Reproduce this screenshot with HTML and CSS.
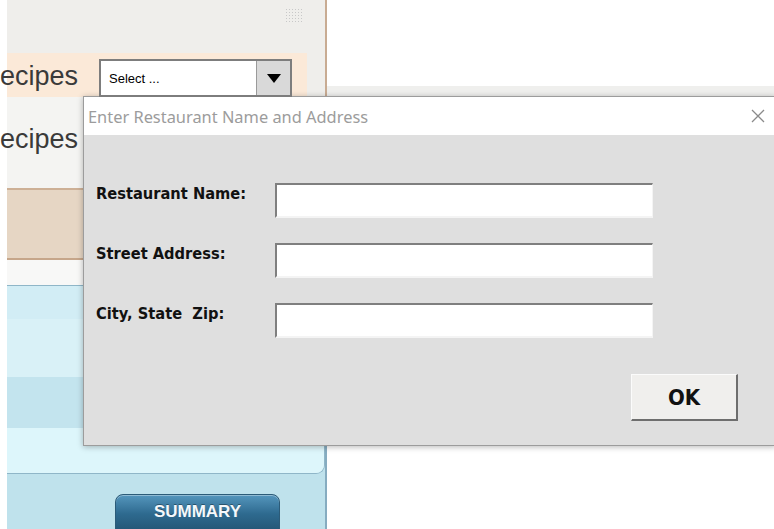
FILE: index.html
```html
<!DOCTYPE html>
<html lang="en">
<head>
<meta charset="utf-8">
<title>Recipes</title>
<link rel="stylesheet" href="styles.css">
</head>
<body>
<div class="page">
  <aside class="sidebar">
    <div class="sidebar-top">
      <span class="grip"></span>
    </div>
    <div class="recipe-row peach">
      <span class="recipe-label">ecipes</span>
      <div class="select">
        <span class="select-text">Select ...</span>
        <span class="select-btn"><svg width="14" height="9" viewBox="0 0 14 9"><path d="M0 0H14L7 9Z" fill="#000"/></svg></span>
      </div>
    </div>
    <div class="recipe-row plain">
      <span class="recipe-label">ecipes</span>
    </div>
    <div class="tan-band"></div>
    <div class="spacer"></div>
    <div class="blue-area">
      <div class="blue-panel">
        <div class="blue-row r1"></div>
        <div class="blue-row r2"></div>
        <div class="blue-row r3"></div>
        <div class="blue-row r4"></div>
      </div>
      <div class="summary-wrap">
        <button class="summary">SUMMARY</button>
      </div>
    </div>
  </aside>
  <main class="main">
    <div class="main-strip"></div>
  </main>
</div>

<div class="dialog">
  <div class="dialog-title">
    <span class="dialog-caption">Enter Restaurant Name and Address</span>
    <svg class="dialog-close" width="14" height="14" viewBox="0 0 14 14"><path d="M1 1L13 13M13 1L1 13" stroke="#8a8a8a" stroke-width="1.3" fill="none"/></svg>
  </div>
  <div class="dialog-body">
    <form class="form">
      <label class="form-label" for="name">Restaurant Name:</label>
      <input class="field" id="name" type="text">
      <label class="form-label" for="street">Street Address:</label>
      <input class="field" id="street" type="text">
      <label class="form-label" for="city">City, State&nbsp; Zip:</label>
      <input class="field" id="city" type="text">
    </form>
    <div class="dialog-actions">
      <button class="ok" type="button">OK</button>
    </div>
  </div>
</div>
</body>
</html>
```

FILE: styles.css
```css
* { box-sizing: border-box; }

html, body {
  margin: 0;
  width: 774px;
  height: 529px;
  overflow: hidden;
  background: #ffffff;
}

.page {
  display: flex;
  height: 529px;
}

/* left navigation column */
.sidebar {
  width: 327px;
  flex: none;
  display: flex;
  flex-direction: column;
  padding-left: 7px;
  background: #fff;
}
.sidebar > * { flex: none; }

.sidebar-top {
  height: 53px;
  background: #efeeeb;
  border-right: 2px solid #c8ab92;
  position: relative;
}

.grip {
  position: absolute;
  left: 278px;
  top: 8px;
  width: 18px;
  height: 15px;
  background-image: radial-gradient(circle, #c8c8c8 0.8px, transparent 1px);
  background-size: 3px 3px;
}

.recipe-row {
  display: flex;
  align-items: center;
  border-right: 2px solid #c8ab92;
  background: #efeeeb;
}

.recipe-label {
  font-family: "Liberation Sans", Arial, sans-serif;
  font-size: 27px;
  color: #3a3a3a;
  margin-left: -7px;
  width: 99px;
  flex: none;
}

.peach {
  height: 44px;
  background: linear-gradient(to right, #fbe9d8 0, #fbe9d8 300px, #efeeeb 300px);
  position: relative;
}
.peach::after {
  content: "";
  position: absolute;
  right: 0;
  top: 0;
  width: 18px;
  height: 100%;
  background: #efeeeb;
  border-top-left-radius: 9px;
}
.peach .recipe-label { margin-top: 2px; }

.select {
  display: flex;
  align-items: stretch;
  height: 38px;
  width: 193px;
  margin-top: 6px;
  border: 2px solid #7d7d7d;
  background: #fff;
  position: relative;
  z-index: 1;
}
.select-text {
  flex: 1;
  font-family: "Liberation Sans", Arial, sans-serif;
  font-size: 13px;
  color: #000;
  padding-left: 8px;
  display: flex;
  align-items: center;
}
.select-btn {
  width: 34px;
  background: #d9d9d9;
  border-left: 1px solid #9a9a9a;
  display: flex;
  align-items: center;
  justify-content: center;
}

.plain {
  height: 91px;
  background: #f4f4f2;
  align-items: flex-start;
  padding-top: 27px;
}

.tan-band {
  height: 72px;
  background: #e6d6c4;
  border-top: 2px solid #cdb096;
  border-bottom: 2px solid #c6a68a;
  border-right: 2px solid #c8ab92;
}

.spacer {
  height: 25px;
  background: #f8f8f7;
  border-right: 2px solid #c8ab92;
}

.sidebar > .blue-area {
  flex: 1 1 auto;
  min-height: 0;
  overflow: hidden;
  background: #bfe2ec;
  border-top: 1px solid #8fb6c8;
  border-right: 2px solid #86acc0;
  display: flex;
  flex-direction: column;
}

.blue-panel {
  flex: none;
  height: 188px;
  display: flex;
  flex-direction: column;
  border-bottom: 1px solid #8fb6c8;
  border-right: 1px solid #8fb6c8;
  border-bottom-right-radius: 9px;
  overflow: hidden;
}
.blue-row { flex: none; }
.r1 { height: 33px; background: #d2edf5; }
.r2 { height: 58px; background: #d9f1f7; }
.r3 { height: 51px; background: #c3e4ee; }
.blue-panel .r4 { flex: 1; background: #ddf6fb; }

.summary-wrap {
  flex: none;
  padding: 20px 0 0 108px;
}
.summary {
  width: 165px;
  height: 44px;
  border-radius: 8px;
  border: 1px solid #2c5b78;
  background: linear-gradient(#5596bd, #2e6a8f 45%, #204f6c);
  color: #f4f8fb;
  font-family: "Liberation Sans", Arial, sans-serif;
  font-weight: bold;
  font-size: 17px;
  padding: 0 0 8px;
  text-shadow: 0 -1px 0 rgba(0, 0, 0, 0.35);
  box-shadow: inset 0 1px 0 rgba(255, 255, 255, 0.35);
}

.main {
  flex: 1;
  padding-top: 86px;
}
.main-strip {
  height: 11px;
  background: #efefed;
}

/* modal dialog */
.dialog {
  position: absolute;
  left: 83px;
  top: 96px;
  width: 693px;
  height: 350px;
  border: 1px solid #9c9c9c;
  background: #dfdfdf;
  box-shadow: 0 1px 6px rgba(0, 0, 0, 0.28);
  display: flex;
  flex-direction: column;
}

.dialog-title {
  height: 38px;
  flex: none;
  background: #ffffff;
  display: flex;
  align-items: center;
  justify-content: space-between;
  padding: 0 10px 0 4px;
}
.dialog-caption {
  font-family: "Noto Sans", "Open Sans", sans-serif;
  font-size: 16.4px;
  color: #9c9c9c;
}

.dialog-body {
  flex: 1;
  padding: 48px 0 0 12px;
}

.form {
  display: grid;
  grid-template-columns: 179px 378px;
  row-gap: 25px;
  align-items: start;
}

.form-label {
  font-family: "DejaVu Sans Condensed", "DejaVu Sans", sans-serif;
  font-weight: bold;
  font-size: 16.3px;
  color: #111;
  line-height: 20px;
  padding-top: 1px;
  white-space: nowrap;
}

.field {
  height: 35px;
  margin: 0;
  background: #fff;
  border-style: solid;
  border-width: 2px 1px 2px 2px;
  border-color: #7f7f7f #f4f4f4 #f4f4f4 #7f7f7f;
  outline: none;
}

.dialog-actions {
  display: flex;
  justify-content: flex-end;
  padding: 36px 37px 0 0;
}

.ok {
  width: 107px;
  height: 47px;
  background: #f0efed;
  border-style: solid;
  border-width: 1px 2px 2px 1px;
  border-color: #fbfbfb #6e6e6e #6e6e6e #fbfbfb;
  font-family: "DejaVu Sans Condensed", "DejaVu Sans", sans-serif;
  font-weight: bold;
  font-size: 22px;
  color: #111;
  padding: 0;
}
```
